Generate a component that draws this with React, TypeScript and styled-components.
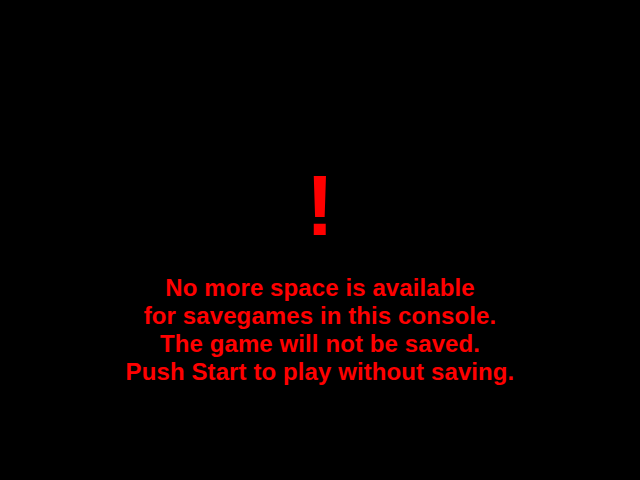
import styled, { createGlobalStyle } from 'styled-components';

const GlobalStyle = createGlobalStyle`
  html, body {
    margin: 0;
    padding: 0;
    background: #000;
  }
`;

const Screen = styled.div`
  width: 640px;
  height: 480px;
  background-color: #000;
  display: flex;
  flex-direction: column;
  align-items: center;
  padding-top: 163px;
  box-sizing: border-box;
  font-family: 'Liberation Sans', Arial, sans-serif;
  font-weight: bold;
  color: #ff0000;
`;

const Bang = styled.div`
  font-size: 85px;
  line-height: 85px;
  height: 85px;
`;

const Message = styled.p`
  margin: 26px 0 0 0;
  font-size: 24px;
  line-height: 28px;
  letter-spacing: 0.1px;
  text-align: center;
`;

const lines = [
  'No more space is available',
  'for savegames in this console.',
  'The game will not be saved.',
  'Push Start to play without saving.',
];

const App = () => {
  return (
    <>
      <GlobalStyle />
      <Screen>
        <Bang>!</Bang>
        <Message>
          {lines.map((line, i) => (
            <span key={i}>
              {line}
              <br />
            </span>
          ))}
        </Message>
      </Screen>
    </>
  );
};

export default App;
